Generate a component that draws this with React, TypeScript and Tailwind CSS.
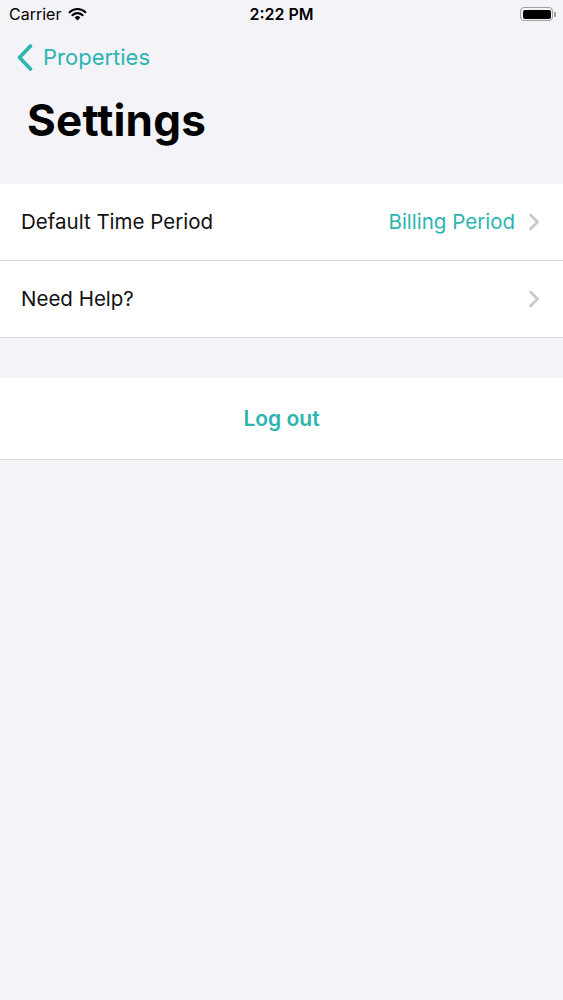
import React from 'react';

const TEAL = 'text-[#2bb5b1]';

function Chevron() {
  return (
    <svg width="12" height="18" viewBox="0 0 12 18" className="shrink-0">
      <path d="M2.5 2 L9.5 9 L2.5 16" fill="none" stroke="#c7c7cc" strokeWidth="2.6" strokeLinecap="round" strokeLinejoin="round" />
    </svg>
  );
}

function StatusBar() {
  return (
    <div className="relative flex h-[28px] items-center pl-[9px] pr-[7px] text-[16px] text-black">
      <div className="flex items-center gap-[7px]">
        <span>Carrier</span>
        <svg width="19" height="14" viewBox="0 0 19 14">
          <path d="M9.5 13.5 L6.6 10.4 A4.2 4.2 0 0 1 12.4 10.4 Z" fill="#000" />
          <path d="M4.4 8.2 A7.3 7.3 0 0 1 14.6 8.2" fill="none" stroke="#000" strokeWidth="2.1" strokeLinecap="round" />
          <path d="M1.6 5.2 A11.2 11.2 0 0 1 17.4 5.2" fill="none" stroke="#000" strokeWidth="2.1" strokeLinecap="round" />
        </svg>
      </div>
      <span className="absolute left-1/2 -translate-x-1/2 font-semibold">2:22 PM</span>
      <div className="ml-auto flex items-center">
        <div className="flex h-[14px] w-[33px] items-center rounded-[4px] border-[1.5px] border-[#a0a0a0] p-[1.5px]">
          <div className="h-full w-full rounded-[2px] bg-black" />
        </div>
        <div className="ml-[1px] h-[5px] w-[2px] rounded-r-[1px] bg-[#a0a0a0]" />
      </div>
    </div>
  );
}

function Row({ label, value }: { label: string; value?: string }) {
  return (
    <div className="flex h-[77px] items-center border-b-[1.5px] border-[#d9d9dc] bg-white pl-[21px] pr-[23px]">
      <span className="text-[20.5px] text-[#111]">{label}</span>
      <div className="ml-auto flex items-center gap-[13px]">
        {value && <span className={`text-[20.5px] ${TEAL}`}>{value}</span>}
        <Chevron />
      </div>
    </div>
  );
}

export default function App() {
  return (
    <div className="min-h-[1000px] w-full bg-[#f4f3f7] font-['Inter',sans-serif]">
      <StatusBar />

      <div className="flex h-[58px] items-center pl-[17px]">
        <svg width="16" height="27" viewBox="0 0 16 27" className="shrink-0">
          <path d="M13.5 2 L2.5 13.5 L13.5 25" fill="none" stroke="#2bb5b1" strokeWidth="3.6" strokeLinecap="round" strokeLinejoin="round" />
        </svg>
        <span className={`ml-[10px] text-[22px] ${TEAL}`}>Properties</span>
      </div>

      <div className="h-[98px] pl-[27px] pt-[12px]">
        <h1 className="text-[44px] font-bold leading-none tracking-[0.2px] text-black">Settings</h1>
      </div>

      <div>
        <Row label="Default Time Period" value="Billing Period" />
        <Row label="Need Help?" />
      </div>

      <div className="mt-[40px] flex h-[82px] items-center justify-center border-b-[1.5px] border-[#d9d9dc] bg-white">
        <span className={`text-[21px] font-semibold ${TEAL}`}>Log out</span>
      </div>
    </div>
  );
}
